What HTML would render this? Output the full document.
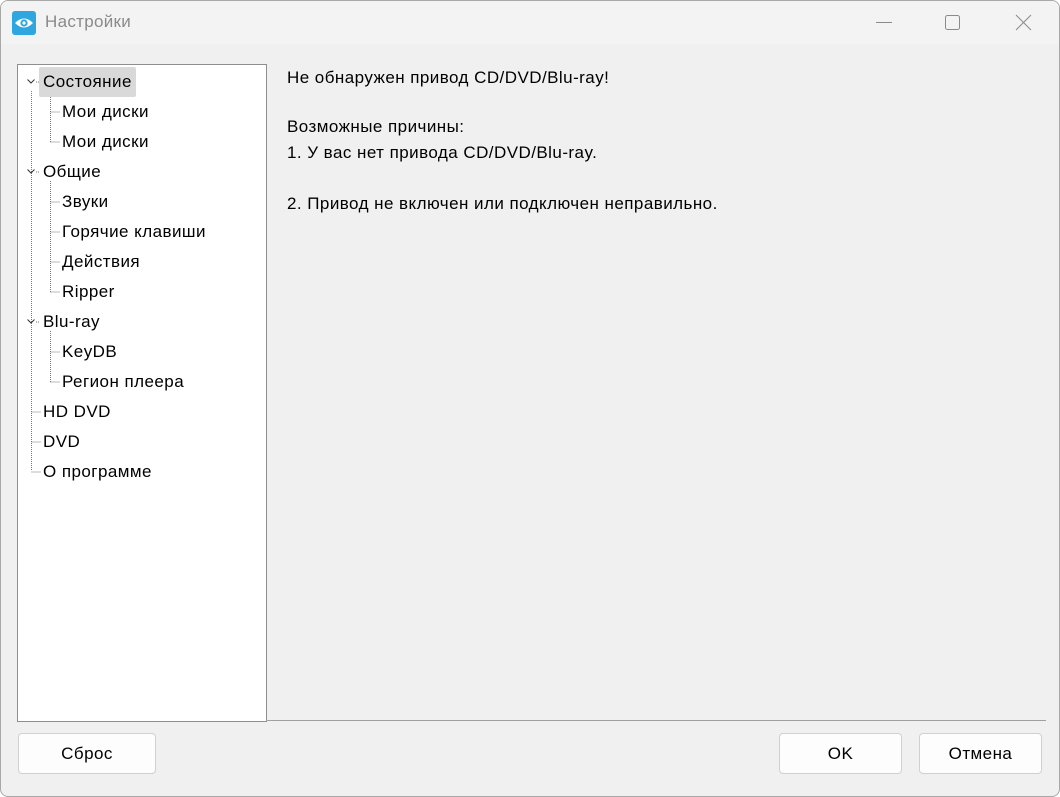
<!DOCTYPE html>
<html><head><meta charset="utf-8"><style>
*{margin:0;padding:0;box-sizing:border-box}
body{width:1060px;height:797px;background:#fff;font-family:"Liberation Sans","Noto Sans CJK SC",sans-serif;font-size:17px;letter-spacing:0.45px;color:#000;overflow:hidden;position:relative}
.win{position:absolute;left:0;top:0;width:1060px;height:797px;border:1px solid #a8a8a8;border-radius:8px;background:#f0f0f0;overflow:hidden}
.in{position:absolute;left:-1px;top:-1px;width:1060px;height:797px}
.title{position:absolute;left:0;top:0;width:100%;height:44px;background:#f3f3f3}
.title .t{position:absolute;left:45px;top:12px;color:#8a8a8a;font-size:17px;letter-spacing:0.3px}
.tree{position:absolute;left:17px;top:64px;width:250px;height:658px;background:#fff;border:1px solid #8e8e8e}
.hline{position:absolute;left:266px;top:720px;width:780px;height:1px;background:#a0a0a0}
.item{position:absolute;height:30px;line-height:30px;white-space:nowrap}
.sel{background:#d9d9d9;border-radius:2px;padding:0 4px}
.txt{position:absolute;left:287px;line-height:30px}
.btn{position:absolute;top:733px;height:41px;background:#fdfdfd;border:1px solid #d0d0d0;border-radius:4px;text-align:center;line-height:39px}
</style></head><body>
<div class="win"><div class="in">
<div class="title">
<svg style="position:absolute;left:12px;top:11px" width="24" height="24"><rect width="24" height="24" rx="3" fill="#2ea7e0"/><path d="M3 12 Q12 3 21 12 Q12 21 3 12Z" fill="#fff"/><circle cx="12" cy="12" r="3.6" fill="#2ea7e0"/><circle cx="12" cy="12" r="1.6" fill="#fff"/></svg>
<div class="t">Настройки</div>
<svg style="position:absolute;left:870px;top:12px" width="170" height="22" fill="none" stroke="#8a8a8a" stroke-width="1"><path d="M6 10.5H22"/><rect x="75.5" y="3.5" width="14" height="14" rx="2"/><path d="M146 3L161 18M161 3L146 18"/></svg>
</div>
<div class="tree">
<svg style="position:absolute;left:0;top:0" width="248" height="656" stroke="#777" stroke-width="1" stroke-dasharray="1 1" fill="none">
<path d="M13.5 26V406"/><path d="M32.5 26V77M32.5 47H42M32.5 77H42"/>
<path d="M32.5 116V227M32.5 137H42M32.5 167H42M32.5 197H42M32.5 227H42"/>
<path d="M32.5 266V317M32.5 287H42M32.5 317H42"/>
<path d="M13.5 347H23M13.5 377H23M13.5 407H23M18 17H21M18 107H21M18 257H21"/>
</svg>
<svg style="position:absolute;left:8px;top:0" width="12" height="300" stroke="#333" stroke-width="1" fill="none"><path d="M1.5 14.5l3.5 3.5 3.5-3.5M1.5 104.5l3.5 3.5 3.5-3.5M1.5 254.5l3.5 3.5 3.5-3.5"/></svg>
<div class="item sel" style="left:21px;top:2px">Состояние</div>
<div class="item" style="left:44px;top:32px">Мои диски</div>
<div class="item" style="left:44px;top:62px">Мои диски</div>
<div class="item" style="left:25px;top:92px">Общие</div>
<div class="item" style="left:44px;top:122px">Звуки</div>
<div class="item" style="left:44px;top:152px">Горячие клавиши</div>
<div class="item" style="left:44px;top:182px">Действия</div>
<div class="item" style="left:44px;top:212px">Ripper</div>
<div class="item" style="left:25px;top:242px">Blu-ray</div>
<div class="item" style="left:44px;top:272px">KeyDB</div>
<div class="item" style="left:44px;top:302px">Регион плеера</div>
<div class="item" style="left:25px;top:332px">HD DVD</div>
<div class="item" style="left:25px;top:362px">DVD</div>
<div class="item" style="left:25px;top:392px">О программе</div>
</div>
<div class="hline"></div>
<div class="txt" style="top:63px">Не обнаружен привод CD/DVD/Blu-ray!</div>
<div class="txt" style="top:114px;line-height:26px">Возможные причины:<br>1. У вас нет привода CD/DVD/Blu-ray.</div>
<div class="txt" style="top:189px">2. Привод не включен или подключен неправильно.</div>
<div class="btn" style="left:18px;width:138px">Сброс</div>
<div class="btn" style="left:779px;width:123px">OK</div>
<div class="btn" style="left:919px;width:123px">Отмена</div>
</div></div>
</body></html>
